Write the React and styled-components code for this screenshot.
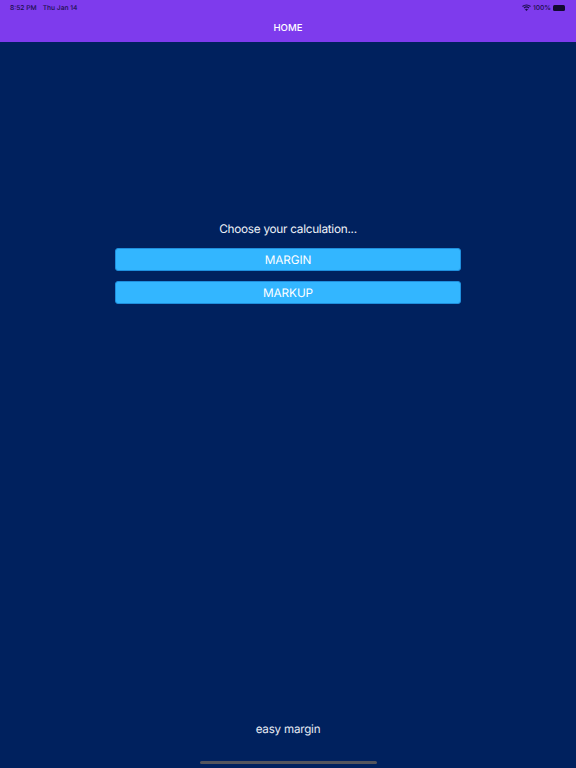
import styled, { createGlobalStyle } from "styled-components";

const GlobalStyle = createGlobalStyle`
  html, body {
    margin: 0;
    padding: 0;
    background-color: #00215e;
  }
  * {
    box-sizing: border-box;
  }
`;

const Page = styled.div`
  width: 576px;
  height: 768px;
  display: flex;
  flex-direction: column;
  position: relative;
  overflow: hidden;
  background-color: #00215e;
  color: white;
  font-family: Inter, "Liberation Sans", sans-serif;
  text-rendering: geometricPrecision;
`;

const Header = styled.header`
  height: 42px;
  flex-shrink: 0;
  background-color: #7e3bed;
  display: flex;
  flex-direction: column;
`;

const StatusBar = styled.div`
  height: 14px;
  padding: 1px 10px 0 10px;
  display: flex;
  justify-content: space-between;
  align-items: center;
  color: #1a0f4a;
  font-size: 6.7px;
  font-weight: 500;
`;

const StatusGroup = styled.div`
  display: flex;
  align-items: center;
  gap: ${(props) => props.$gap}px;
`;

const Battery = styled.div`
  width: 12px;
  height: 6px;
  margin-right: 1px;
  border-radius: 1.5px;
  background-color: #120a30;
  position: relative;

  ::after {
    content: '';
    position: absolute;
    right: -1.5px;
    top: 2px;
    width: 1px;
    height: 2px;
    background-color: #3a2380;
  }
`;

const NavTitle = styled.div`
  flex: 1;
  display: flex;
  justify-content: center;
  align-items: center;
  font-size: 9.6px;
  font-weight: 500;
`;

const Main = styled.main`
  flex: 1;
  display: flex;
  flex-direction: column;
  align-items: center;
  padding-top: 179px;
`;

const Prompt = styled.div`
  font-size: 11.8px;
  letter-spacing: -0.28px;
  line-height: 16px;
  color: #eef2f8;
  margin-bottom: 11px;
`;

const Button = styled.button`
  width: 346px;
  height: 23px;
  margin-bottom: 10px;
  padding: 1px 0 0;
  background-color: #33b6ff;
  border: 1px solid #1f8fdd;
  border-radius: 3px;
  color: white;
  font-family: inherit;
  font-size: 11.8px;
  letter-spacing: -0.1px;
  text-rendering: geometricPrecision;
`;

const Footer = styled.footer`
  height: 47px;
  flex-shrink: 0;
  text-align: center;
  font-size: 11.6px;
  letter-spacing: -0.2px;
  line-height: 16px;
  color: #e6ebf4;
`;

const HomeIndicator = styled.div`
  position: absolute;
  left: 200px;
  bottom: 4px;
  width: 177px;
  height: 3px;
  border-radius: 2px;
  background-color: #54555c;
`;

function WifiIcon() {
  return (
    <svg width="9" height="7" viewBox="0 0 18 14" fill="none" stroke="#1a0f4a" strokeWidth="2.2">
      <path d="M1 5 C5.5 0.8 12.5 0.8 17 5" />
      <path d="M4 8 C6.8 5.5 11.2 5.5 14 8" />
      <path d="M9 13.5 L6.6 10.9 C8 9.9 10 9.9 11.4 10.9 Z" fill="#1a0f4a" strokeWidth="1" />
    </svg>
  );
}

export default function App() {
  return (
    <Page>
      <GlobalStyle />
      <Header>
        <StatusBar>
          <StatusGroup $gap={6}>
            <span>8:52 PM</span>
            <span>Thu Jan 14</span>
          </StatusGroup>
          <StatusGroup $gap={2}>
            <WifiIcon />
            <span>100%</span>
            <Battery />
          </StatusGroup>
        </StatusBar>
        <NavTitle>HOME</NavTitle>
      </Header>
      <Main>
        <Prompt>Choose your calculation...</Prompt>
        <Button>MARGIN</Button>
        <Button>MARKUP</Button>
      </Main>
      <Footer>easy margin</Footer>
      <HomeIndicator />
    </Page>
  );
}
